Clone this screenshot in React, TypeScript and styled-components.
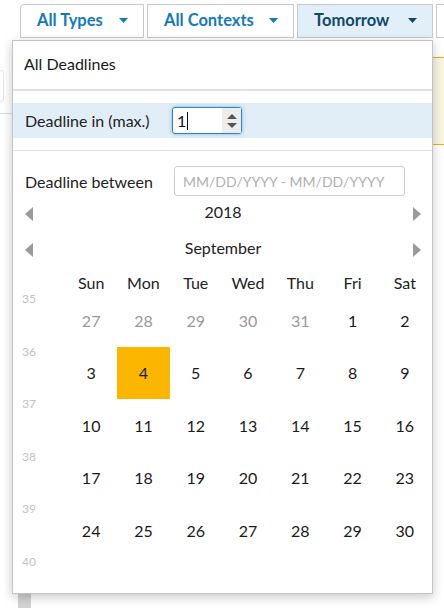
import React from "react";
import styled, { createGlobalStyle } from "styled-components";

const GlobalStyle = createGlobalStyle`
  html, body {
    margin: 0;
    padding: 0;
    background: #fff;
  }
  body {
    font-family: Lato, "Open Sans", sans-serif;
    color: #222;
  }
`;

const tabs = [
  { label: "All Types", width: 124, active: false, first: true },
  { label: "All Contexts", width: 147, active: false, first: false },
  { label: "Tomorrow", width: 136, active: true, first: false },
];

type Day = { n: number; muted?: boolean; selected?: boolean };

const weeks: { no: number; days: Day[] }[] = [
  {
    no: 35,
    days: [
      { n: 27, muted: true },
      { n: 28, muted: true },
      { n: 29, muted: true },
      { n: 30, muted: true },
      { n: 31, muted: true },
      { n: 1 },
      { n: 2 },
    ],
  },
  { no: 36, days: [3, 4, 5, 6, 7, 8, 9].map((n) => ({ n, selected: n === 4 })) },
  { no: 37, days: [10, 11, 12, 13, 14, 15, 16].map((n) => ({ n })) },
  { no: 38, days: [17, 18, 19, 20, 21, 22, 23].map((n) => ({ n })) },
  { no: 39, days: [24, 25, 26, 27, 28, 29, 30].map((n) => ({ n })) },
];

const weekdays = ["Sun", "Mon", "Tue", "Wed", "Thu", "Fri", "Sat"];

const Caret = ({ color }: { color: string }) => (
  <svg width="9" height="5" viewBox="0 0 9 5">
    <polygon points="0,0 9,0 4.5,5" fill={color} />
  </svg>
);

const NavArrow = ({ dir }: { dir: "left" | "right" }) => (
  <svg width="8" height="14" viewBox="0 0 8 14">
    <polygon points={dir === "left" ? "8,0 8,14 0,7" : "0,0 0,14 8,7"} fill="#9a9a9a" />
  </svg>
);

const App = () => {
  return (
    <Page>
      <GlobalStyle />
      <TabBar>
        {tabs.map((t) => (
          <Tab key={t.label} $w={t.width} $active={t.active} $first={t.first}>
            {t.label}
            <Caret color={t.active ? "#0e4a6e" : "#1479bd"} />
          </Tab>
        ))}
        <Tab $w={60} $active={false} $first={false} />
      </TabBar>

      <Backdrop>
        <SideCol>
          <GhostBox />
          <SideRule />
        </SideCol>
        <Alert />
      </Backdrop>
      <ScrollStub />

      <Dropdown>
        <OptionRow>All Deadlines</OptionRow>
        <ThickRule />
        <Section>
          <HighlightRow>
            <Label $w={133}>Deadline in (max.)</Label>
            <NumberBox>
              <NumberValue>1</NumberValue>
              <TextCaret />
              <Spinner>
                <svg width="10" height="16" viewBox="0 0 10 16">
                  <polygon points="5,1 10,6 0,6" fill="#555" />
                  <polygon points="0,10 10,10 5,15" fill="#555" />
                </svg>
              </Spinner>
            </NumberBox>
          </HighlightRow>
        </Section>
        <ThinRule />
        <RangeRow>
          <Label $w={134}>Deadline between</Label>
          <RangeInput placeholder="MM/DD/YYYY - MM/DD/YYYY" readOnly />
        </RangeRow>

        <NavRow $top={2}>
          <NavArrow dir="left" />
          <NavTitle>2018</NavTitle>
          <NavArrow dir="right" />
        </NavRow>
        <NavRow $top={10}>
          <NavArrow dir="left" />
          <NavTitle>September</NavTitle>
          <NavArrow dir="right" />
        </NavRow>

        <CalendarGrid>
          <span />
          {weekdays.map((d) => (
            <HeadCell key={d}>{d}</HeadCell>
          ))}
          {weeks.map((w) => (
            <React.Fragment key={w.no}>
              <WeekNo>{w.no}</WeekNo>
              {w.days.map((d, i) => (
                <DayCell key={i} $muted={!!d.muted} $selected={!!d.selected}>
                  {d.n}
                </DayCell>
              ))}
            </React.Fragment>
          ))}
          <WeekNo>40</WeekNo>
        </CalendarGrid>
      </Dropdown>
    </Page>
  );
};

export default App;

const Page = styled.div`
  position: relative;
  width: 444px;
  height: 608px;
  overflow: hidden;
`;

const TabBar = styled.div`
  display: flex;
  gap: 3px;
  padding: 4px 0 0 20px;
`;

const Tab = styled.button<{ $w: number; $active: boolean; $first: boolean }>`
  flex: none;
  width: ${(p) => p.$w}px;
  height: 34px;
  box-sizing: border-box;
  display: flex;
  align-items: center;
  justify-content: space-between;
  padding: 0 15px 2px 16px;
  border: 1px solid #c9c9c9;
  border-radius: ${(p) => (p.$first ? "4px 0 0 0" : "0")};
  background: ${(p) => (p.$active ? "#e2eff8" : "#fff")};
  color: ${(p) => (p.$active ? "#0e4a6e" : "#1479bd")};
  font-family: Lato, "Open Sans", sans-serif;
  font-size: 16.5px;
  font-weight: 700;
`;

const Backdrop = styled.div`
  display: flex;
  padding-top: 19px;
`;

const SideCol = styled.div`
  width: 14px;
  flex: none;
  padding-top: 13px;
`;

const GhostBox = styled.div`
  width: 4px;
  height: 30px;
  margin-left: -2px;
  border: 1px solid #e6e6e6;
  border-radius: 4px;
`;

const SideRule = styled.div`
  width: 12px;
  height: 1px;
  margin-top: 11px;
  background: #dcdcdc;
`;

const Alert = styled.div`
  flex: 1;
  margin-left: 418px;
  height: 86px;
  background: #fcf4e2;
  border-top: 1px solid #f0b400;
  border-bottom: 1px solid #f0b400;
`;

const ScrollStub = styled.div`
  position: absolute;
  left: 18px;
  bottom: 0;
  width: 13px;
  height: 20px;
  background: #d2d2d2;
`;

const Dropdown = styled.div`
  position: absolute;
  top: 40px;
  left: 12px;
  width: 421px;
  height: 554px;
  box-sizing: border-box;
  overflow: hidden;
  background: #fff;
  border: 1px solid #c4c4c4;
  box-shadow: 0 3px 10px rgba(0, 0, 0, 0.22);
  font-size: 16px;
`;

const OptionRow = styled.div`
  height: 48px;
  box-sizing: border-box;
  display: flex;
  align-items: center;
  padding: 0 11px 4px;
  color: #1a1a1a;
`;

const ThickRule = styled.div`
  height: 2px;
  background: #e1e1e1;
`;

const ThinRule = styled.div`
  height: 1px;
  background: #e3e3e3;
`;

const Section = styled.div`
  padding: 12px 0;
`;

const HighlightRow = styled.div`
  height: 35px;
  display: flex;
  align-items: center;
  gap: 14px;
  padding: 0 12px;
  background: #e2eef7;
`;

const Label = styled.span<{ $w: number }>`
  width: ${(p) => p.$w}px;
  flex: none;
  color: #222;
  white-space: nowrap;
`;

const NumberBox = styled.div`
  position: relative;
  width: 70px;
  height: 27px;
  box-sizing: border-box;
  display: flex;
  align-items: center;
  padding-left: 4px;
  background: #fff;
  border: 1px solid #2a85c6;
  border-radius: 3px;
  box-shadow: 0 0 4px rgba(42, 133, 198, 0.5);
`;

const NumberValue = styled.span`
  font-size: 16px;
  color: #111;
`;

const TextCaret = styled.span`
  width: 1px;
  height: 18px;
  margin-left: 1px;
  background: #111;
`;

const Spinner = styled.div`
  margin-left: auto;
  width: 19px;
  align-self: stretch;
  display: flex;
  align-items: center;
  justify-content: center;
  background: #ececec;
`;

const RangeRow = styled.div`
  display: flex;
  align-items: center;
  gap: 15px;
  margin-top: 15px;
  padding: 0 12px;
`;

const RangeInput = styled.input`
  width: 231px;
  height: 30px;
  box-sizing: border-box;
  padding: 0 8px;
  border: 1px solid #cdcdcd;
  border-radius: 3px;
  font-family: Lato, "Open Sans", sans-serif;
  font-size: 14px;
  outline: none;
  &::placeholder {
    color: #b0b0b0;
  }
`;

const NavRow = styled.div<{ $top: number }>`
  display: flex;
  align-items: center;
  justify-content: space-between;
  height: 26px;
  margin-top: ${(p) => p.$top}px;
  padding: 0 11px 0 12px;
  & > svg {
    margin-top: 6px;
  }
`;

const NavTitle = styled.span`
  color: #222;
`;

const CalendarGrid = styled.div`
  display: grid;
  grid-template-columns: 43px repeat(7, 1fr);
  grid-auto-rows: 52.5px;
  grid-template-rows: 24px;
  margin-top: 10px;
  padding: 0 1px 0 9px;
`;

const HeadCell = styled.div`
  display: flex;
  align-items: center;
  justify-content: center;
  color: #222;
`;

const WeekNo = styled.div`
  grid-column: 1;
  font-size: 12px;
  line-height: 10px;
  color: #c2c2c2;
`;

const DayCell = styled.div<{ $muted: boolean; $selected: boolean }>`
  display: flex;
  align-items: center;
  justify-content: center;
  color: ${(p) => (p.$muted ? "#999" : "#1a1a1a")};
  background: ${(p) => (p.$selected ? "#fbb600" : "transparent")};
`;
